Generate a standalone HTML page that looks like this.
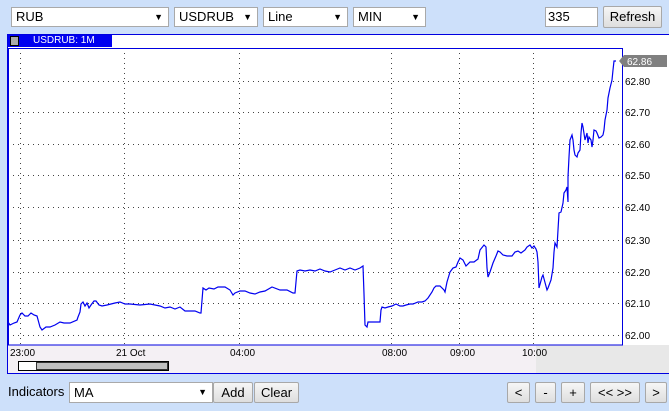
<!DOCTYPE html>
<html><head><style>
body{margin:0;width:669px;height:411px;background:#cde0fa;font-family:"Liberation Sans",Arial,sans-serif;position:relative;overflow:hidden}
.sel{position:absolute;top:7px;height:18px;background:#fff;border:1px solid #a9a9a9;font-size:13px;line-height:18px;box-sizing:border-box;height:20px;padding-left:4px}
.sel:after{content:"▼";position:absolute;right:5px;top:0;font-size:9px}
.btn{position:absolute;height:21px;box-sizing:border-box;border:1px solid #a8a8a8;border-radius:2px;background:linear-gradient(#f6f6f6,#dedede);font-size:13px;line-height:19px;text-align:center}
</style></head><body>
<div class="sel" style="left:11px;width:158px">RUB</div>
<div class="sel" style="left:174px;width:84px">USDRUB</div>
<div class="sel" style="left:263px;width:85px">Line</div>
<div class="sel" style="left:353px;width:73px">MIN</div>
<div class="sel" style="left:545px;width:53px;padding-left:2px">335</div>
<style>.sel:nth-of-type(5):after{content:""}</style>
<div class="btn" style="left:603px;top:6px;width:59px;height:22px;line-height:20px">Refresh</div>

<div style="position:absolute;left:7px;top:34px;width:662px;height:340px;background:#fff;border:1px solid #0000e0;border-right:none;box-sizing:border-box"></div>
<div style="position:absolute;left:8px;top:35px;width:104px;height:12px;background:#0000f0"></div>
<div style="position:absolute;left:10px;top:36px;width:9px;height:10px;background:#aaa;border:1px solid #000;box-sizing:border-box"></div>
<div style="position:absolute;left:33px;top:35px;color:#fff;font-size:10px;line-height:12px">USDRUB: 1M</div>
<div style="position:absolute;left:8px;top:345px;width:661px;height:28px;background:#f4f0f4"></div>
<div style="position:absolute;left:536px;top:345px;width:133px;height:28px;background:#e8e8e8"></div>
<div style="position:absolute;left:18px;top:361px;width:151px;height:10px;border:1px solid #000;box-sizing:border-box;background:#fff"></div>
<div style="position:absolute;left:36px;top:362px;width:132px;height:8px;border:1px solid #333;box-sizing:border-box;background:#c0c0c0"></div>

<svg style="position:absolute;left:0;top:0" width="669" height="411">
<g stroke="#444" stroke-width="1" stroke-dasharray="1,4">
<line x1="8" x2="622" y1="81.5" y2="81.5"/><line x1="8" x2="622" y1="112.5" y2="112.5"/><line x1="8" x2="622" y1="144.5" y2="144.5"/><line x1="8" x2="622" y1="175.5" y2="175.5"/><line x1="8" x2="622" y1="207.5" y2="207.5"/><line x1="8" x2="622" y1="240.5" y2="240.5"/><line x1="8" x2="622" y1="272.5" y2="272.5"/><line x1="8" x2="622" y1="303.5" y2="303.5"/><line x1="8" x2="622" y1="335.5" y2="335.5"/>
<line x1="20.5" x2="20.5" y1="48" y2="345"/><line x1="124.5" x2="124.5" y1="48" y2="345"/><line x1="239.5" x2="239.5" y1="48" y2="345"/><line x1="391.5" x2="391.5" y1="48" y2="345"/><line x1="459.5" x2="459.5" y1="48" y2="345"/><line x1="533.5" x2="533.5" y1="48" y2="345"/>
</g>
<rect x="8.5" y="48.5" width="614" height="296.5" fill="none" stroke="#0000e0"/>
<polyline fill="none" stroke="#0000f0" stroke-width="1.2" points="8,322 10,325 14,323 17,322 20,315 22,313 25,316 28,316 31,313 34,315 37,316 40,327 42,330 46,327 50,327 55,325 60,322 64,323 70,323 77,320 78,317 80,312 81,304 83,302 85,306 87,303 89,308 91,305 94,301 96,301 99,305 102,306 107,305 115,303 120,302 125,304 130,304 140,305 150,304 160,306 165,308 170,307 175,309 180,307 185,311 190,311 195,311 200,313 201,313 203,288 206,290 209,288 214,289 218,287 225,287 230,290 233,295 235,293 240,291 245,291 250,293 255,294 260,292 265,291 272,287 280,290 287,290 293,293 295,293 297,271 300,270 305,271 310,270 315,271 320,269 325,271 330,272 335,270 340,268 345,270 350,268 355,270 360,268 363,266 364,294 365,325 367,327 368,322 380,322 381,310 382,307 385,308 388,307 392,306 396,304 400,306 403,306 406,305 410,304 413,304 418,302 422,302 425,301 428,298 432,292 434,288 436,286 440,286 444,290 445,292 447,282 450,272 453,268 456,267 458,262 460,258 463,260 466,266 470,262 474,262 478,259 480,250 484,245 486,247 487,268 488,277 490,272 493,263 496,256 498,251 500,252 503,255 507,256 512,256 515,252 518,251 521,253 525,250 527,247 530,245 532,248 534,246 536,249 537,252 538,262 539,288 542,277 543,275 547,290 548,288 551,280 553,268 554,252 555,243 557,247 558,230 559,213 561,212 563,203 564,193 566,190 567,187 568,202 568,177 569,157 570,140 572,135 573,140 574,150 575,155 577,157 578,153 580,150 581,133 582,123 583,127 585,140 587,133 588,143 589,137 591,140 592,147 593,140 594,130 596,131 597,133 599,138 601,137 603,135 604,130 605,120 607,110 608,98 610,88 612,80 613,70 614,61 616,61"/>
<polygon points="619,61 624,55 667,55 667,67 624,67" fill="#808080"/>
<text x="627" y="65" fill="#fff" font-size="10" font-family="Liberation Sans,Arial">62.86</text>
<g font-size="10" font-family="Liberation Sans,Arial" fill="#000">
<text x="625" y="85">62.80</text><text x="625" y="116">62.70</text><text x="625" y="148">62.60</text><text x="625" y="179">62.50</text><text x="625" y="211">62.40</text><text x="625" y="244">62.30</text><text x="625" y="276">62.20</text><text x="625" y="307">62.10</text><text x="625" y="339">62.00</text>
<text x="10" y="356">23:00</text><text x="116" y="356">21 Oct</text><text x="230" y="356">04:00</text><text x="382" y="356">08:00</text><text x="450" y="356">09:00</text><text x="522" y="356">10:00</text>
</g>
</svg>

<div style="position:absolute;left:8px;top:384px;font-size:13px">Indicators</div>
<div class="sel" style="left:69px;top:382px;width:144px;height:21px;line-height:19px">MA</div>
<div class="btn" style="left:213px;top:382px;width:40px">Add</div>
<div class="btn" style="left:254px;top:382px;width:45px">Clear</div>
<div class="btn" style="left:507px;top:382px;width:23px">&lt;</div>
<div class="btn" style="left:535px;top:382px;width:21px">-</div>
<div class="btn" style="left:561px;top:382px;width:24px">+</div>
<div class="btn" style="left:590px;top:382px;width:50px">&lt;&lt; &gt;&gt;</div>
<div class="btn" style="left:645px;top:382px;width:22px">&gt;</div>
</body></html>
